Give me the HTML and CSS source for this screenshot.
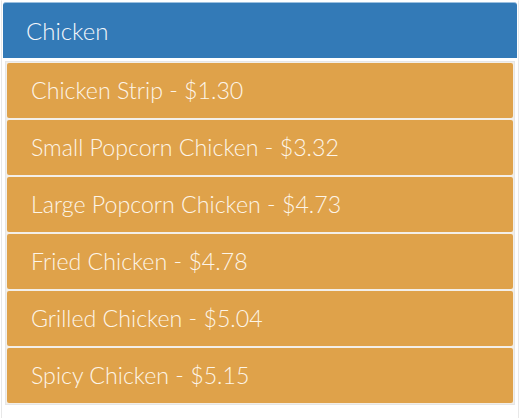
FILE: index.html
```html
<!DOCTYPE html>
<html>
<head>
<meta charset="utf-8">
<link rel="stylesheet" href="styles.css">
</head>
<body>
<div class="panel">
  <div class="panel-heading">Chicken</div>
  <div class="list">
    <div class="item">Chicken Strip - $1.30</div>
    <div class="item">Small Popcorn Chicken - $3.32</div>
    <div class="item">Large Popcorn Chicken - $4.73</div>
    <div class="item">Fried Chicken - $4.78</div>
    <div class="item">Grilled Chicken - $5.04</div>
    <div class="item">Spicy Chicken - $5.15</div>
  </div>
</div>
</body>
</html>
```
FILE: styles.css
```css
html, body {
  margin: 0;
  padding: 0;
  background: #ffffff;
}
body {
  font-family: "Lato Light", Lato, "Open Sans", sans-serif;
  font-weight: 300;
}
.panel {
  margin: 0 1px;
  height: 418px;
  box-sizing: border-box;
  border-left: 1px solid #e8e8e8;
  border-right: 1px solid #e8e8e8;
  padding: 1px 1px 0 1px;
  border-top: 1px solid #ffffff;
}
.panel-heading {
  background: #337ab7;
  color: #f4f7fb;
  font-size: 24px;
  height: 56px;
  line-height: 56px;
  padding-left: 23px;
  border-radius: 3px 3px 0 0;
  border-top: 1px solid #9cc0df;
  box-sizing: border-box;
}
.list {
  margin: 3px 2px 0 2px;
  border: 1px solid #e6e6e6;
  padding: 1px;
  display: flex;
  flex-direction: column;
  gap: 2px;
  background: #f3efe9;
}
.item {
  background: #dfa24a;
  color: #fdf5e8;
  font-size: 23.2px;
  height: 55px;
  line-height: 54px;
  padding-left: 24px;
  border-radius: 2px;
}
```
